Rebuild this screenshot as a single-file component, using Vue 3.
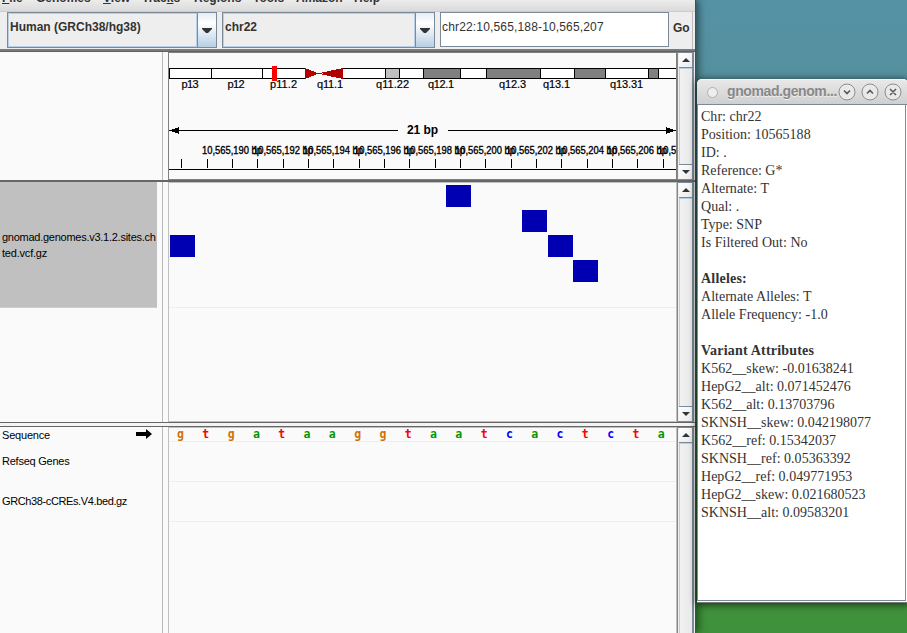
<script setup>
const menus = [
  { pre: '', key: 'F', post: 'ile', w: 34 },
  { pre: 'Genomes', key: '', post: '', w: 67 },
  { pre: '', key: 'V', post: 'iew', w: 39 },
  { pre: 'Trac', key: 'k', post: 's', w: 52 },
  { pre: 'Regions', key: '', post: '', w: 59 },
  { pre: 'Tools', key: '', post: '', w: 43 },
  { pre: 'Amazon', key: '', post: '', w: 58 },
  { pre: 'Help', key: '', post: '', w: 40 },
]
// Coordinates in the drawings are relative to each data panel's left edge.
const bands = [
  [0, 42, '#fff'], [42, 51, '#fff'], [93, 43, '#fff'],
  [173, 43, '#fff'], [216, 14, '#c0c0c0'], [230, 24, '#fff'],
  [254, 37, '#808080'], [291, 26, '#fff'], [317, 54, '#808080'],
  [371, 34, '#fff'], [405, 31, '#808080'], [436, 43, '#fff'],
  [479, 10, '#808080'], [489, 30, '#fff'],
]
const bandLabels = [
  ['p13', 12.5, 17], ['p12', 58.5, 17], ['p11.2', 101, 27], ['q11.1', 148, 26], ['q11.22', 207, 33],
  ['q12.1', 259, 26], ['q12.3', 330, 27], ['q13.1', 374, 27], ['q13.31', 441, 33],
]
const ticks = [12, 38, 63, 88, 114, 139, 164, 190, 215, 240, 266, 291, 316, 342, 367, 392, 418, 443, 468, 494]
const coords = [63, 114, 164, 215, 266, 316, 367, 418, 468, 519].map((x, i) => ({
  x: x - 30, t: `10,565,${190 + i * 2} bp`,
}))
const variants = [[1, 53], [277, 3], [353, 28], [379, 53], [404, 78]]
const colors = { g: '#d17105', t: '#ff0000', a: '#009600', c: '#0000ff' }
const bases = 'gtgataaggtaatcactcta'.split('').map((b, i) => ({
  b, x: 11.5 + i * 25.3, c: colors[b],
}))
const lines = [
  'Chr: chr22', 'Position: 10565188', 'ID: .', 'Reference: G*', 'Alternate: T', 'Qual: .', 'Type: SNP',
  'Is Filtered Out: No', '', '#Alleles:', 'Alternate Alleles: T', 'Allele Frequency: -1.0', '',
  '#Variant Attributes', 'K562__skew: -0.01638241', 'HepG2__alt: 0.071452476', 'K562__alt: 0.13703796',
  'SKNSH__skew: 0.042198077', 'K562__ref: 0.15342037', 'SKNSH__ref: 0.05363392', 'HepG2__ref: 0.049771953',
  'HepG2__skew: 0.021680523', 'SKNSH__alt: 0.09583201',
].map(s => ({ bold: s[0] === '#', t: s.replace('#', '') }))
</script>

<template>
  <div class="desktop">
    <main class="igv">
      <nav class="menubar">
        <span v-for="(m, i) in menus" :key="i" class="menu" :style="{ width: m.w + 'px' }">{{ m.pre }}<i v-if="m.key">{{ m.key }}</i>{{ m.post }}</span>
      </nav>
      <div class="toolbar">
        <div class="combo genome">
          <span class="value">Human (GRCh38/hg38)</span>
          <span class="drop"><svg width="10" height="5"><path d="M0 0h10v1L6 5H4L0 1z" fill="#333" /></svg></span>
        </div>
        <div class="combo chrom">
          <span class="value">chr22</span>
          <span class="drop"><svg width="10" height="5"><path d="M0 0h10v1L6 5H4L0 1z" fill="#333" /></svg></span>
        </div>
        <div class="locus">chr22:10,565,188-10,565,207</div>
        <div class="go">Go</div>
      </div>
      <div class="divider top"></div>

      <section class="panel header">
        <div class="names"></div>
        <div class="gap"></div>
        <div class="data">
          <svg class="draw" width="507" height="126" shape-rendering="crispEdges">
            <rect v-for="(b, i) in bands" :key="i" :x="b[0] + .5" y="15.5" :width="b[1]" height="10" :fill="b[2]" stroke="#000" />
            <path d="M136 15l11 4.5v2L136 26z M174 15l-21 4.5v2L174 26z M146 20h8v1h-8z" fill="#b00000" />
            <rect x="103" y="13" width="5" height="15" fill="#f00" />
            <text v-for="l in bandLabels" :key="l[0]" :x="l[1]" y="35" :textLength="l[2]" class="band">{{ l[0] }}</text>
            <path d="M0 77.5h229M279 77.5h228M0 116.5h507" stroke="#000" />
            <path d="M2 77l8-3v7l-8-3z M505 77l-8-3v7l8-3z" fill="#000" />
            <text x="238" y="81" textLength="31" class="span">21 bp</text>
            <rect v-for="x in ticks" :key="x" :x="x" y="106" width="1" height="9" />
            <text v-for="c in coords" :key="c.t" :x="c.x" y="101" textLength="60" lengthAdjust="spacingAndGlyphs" class="coord">{{ c.t }}</text>
          </svg>
        </div>
        <div class="scroll"><b><svg width="8" height="4"><path d="M4 0L8 4H0z" /></svg></b><em></em><b><svg width="8" height="4"><path d="M4 4L8 0H0z" /></svg></b></div>
      </section>
      <div class="divider mid"></div>

      <section class="panel variants">
        <div class="names">
          <div class="selected"><span class="l1">gnomad.genomes.v3.1.2.sites.ch</span><span class="l2">ted.vcf.gz</span></div>
        </div>
        <div class="gap"></div>
        <div class="data">
          <svg class="draw" width="507" height="238" shape-rendering="crispEdges">
            <rect v-for="(v, i) in variants" :key="i" :x="v[0]" :y="v[1] - 1" width="25" height="22" fill="#0000b2" />
            <rect x="0" y="124" width="507" height="1" fill="#eee" />
          </svg>
        </div>
        <div class="scroll"><b><svg width="8" height="4"><path d="M4 0L8 4H0z" /></svg></b><em></em><b><svg width="8" height="4"><path d="M4 4L8 0H0z" /></svg></b></div>
      </section>
      <div class="divider split"></div>

      <section class="panel features">
        <div class="names">
          <div class="name seq"><span>Sequence</span><svg width="16" height="10" viewBox="0 0 16 10"><path d="M0 3h10V0l6 5-6 5V7H0z" /></svg></div>
          <div class="name refseq">Refseq Genes</div>
          <div class="name ccre">GRCh38-cCREs.V4.bed.gz</div>
        </div>
        <div class="gap"></div>
        <div class="data">
          <svg class="draw" width="507" height="205">
            <text v-for="(s, i) in bases" :key="i" :x="s.x" y="9.6" :fill="s.c" class="base">{{ s.b }}</text>
            <g fill="#eee"><rect y="13" width="507" height="1" /><rect y="53" width="507" height="1" /><rect y="93" width="507" height="1" /></g>
          </svg>
        </div>
        <div class="scroll"><b><svg width="8" height="4"><path d="M4 0L8 4H0z" /></svg></b><em></em></div>
      </section>
    </main>

    <aside class="popup">
      <header class="title">
        <span class="dot"></span>
        <span class="caption">gnomad.genom...</span>
        <svg class="controls" width="64" height="18" viewBox="0 0 64 18">
          <g fill="#e9e9e9" stroke="#8e8e8e"><circle cx="9" cy="9" r="8" /><circle cx="32" cy="9" r="8" /><circle cx="55" cy="9" r="8" /></g>
          <g fill="none" stroke="#5a5a5a" stroke-width="1.6"><path d="M6 7.5l3 3 3-3M29 10.5l3-3 3 3M52 6l6 6M58 6l-6 6" /></g>
        </svg>
      </header>
      <div class="details">
        <p v-for="(l, i) in lines" :key="i" :class="{ bold: l.bold }">{{ l.t }}</p>
      </div>
    </aside>
  </div>
</template>

<style>
body { margin: 0; overflow: hidden; }
</style>
<style scoped>
* { box-sizing: border-box; }
.desktop { position: relative; width: 907px; height: 633px; overflow: hidden; background: linear-gradient(#5492a5 0, #56909d 80px, #3f913b 600px, #3f913b); font-family: "Liberation Sans", sans-serif; }
.igv { position: absolute; left: 0; top: 0; width: 696px; height: 633px; background: #eee; border-right: 1px solid #4c4c4c; box-shadow: 2px 0 8px rgba(0, 0, 0, .55); display: flex; flex-direction: column; overflow: visible; }
.menubar { height: 12px; flex: none; display: flex; overflow: hidden; padding-left: 2px; background: linear-gradient(#ececec, #dadada); border-bottom: 1px solid #ccc; }
.menu { flex: none; white-space: nowrap; font: bold 12px/14px "Liberation Sans", sans-serif; color: #333; margin-top: -9px; height: 20px; }
.menu i { font-style: normal; text-decoration: underline; text-underline-offset: 1px; text-decoration-thickness: 1px; text-decoration-skip-ink: none; }
.toolbar { height: 37px; flex: none; display: flex; align-items: flex-start; padding-left: 7px; width: 693px; border-right: 1px solid #bbb; color: #333; }
.combo { height: 36px; border: 1px solid #7a8a99; display: flex; font-weight: bold; font-size: 12px; background: #eee; }
.genome { width: 210px; margin-right: 5px; }
.chrom { width: 213px; margin-right: 5px; }
.value { flex: 1; border: 1px solid #b8cfe5; line-height: 27px; padding-left: 1px; }
.drop { width: 19px; border-left: 1px solid #7a8a99; background: linear-gradient(#e3edf6, #fff 30%, #b8cfe5); display: flex; align-items: center; justify-content: center; }
.locus { width: 229px; height: 35px; border: 1px solid #7a8a99; background: #fff; font-size: 12px; line-height: 29px; padding-left: 1px; letter-spacing: .16px; white-space: nowrap; }
.go { margin-left: 4px; font-weight: bold; font-size: 12px; line-height: 32px; }
.divider { flex: none; width: 695px; background: #666; }
.top { height: 3px; background: linear-gradient(#7b7b7b 66%, #606060 66%); }
.mid { height: 2px; }
.split { height: 5px; background: #f4f4f4; border-top: 1px solid #666; border-bottom: 1px solid #666; }
.panel { display: flex; flex: none; width: 694px; background: #fafafa; font-size: 11px; color: #000; }
.header { height: 128px; }
.variants { height: 240px; }
.features { height: 206px; }
.names { width: 162px; }
.gap { width: 6px; border-left: 1px solid #bbb; background: #fafafa; }
.data { width: 509px; overflow: hidden; border: 1px solid #c0c0c0; }
.header .data { border-color: #808080; }
.features .data { border-bottom: 0; }
.draw { display: block; }
.scroll { width: 17px; display: flex; flex-direction: column; border: 1px solid #7a8a99; border-right-width: 2px; background: #eee; padding-left: 1px; }
.features .scroll { border-bottom: 0; }
.scroll b { height: 14px; flex: none; display: flex; align-items: center; justify-content: center; background: linear-gradient(135deg, #fff, #ebebeb); fill: #333; }
.scroll em { flex: 1; border: 1px solid #7a8a99; border-width: 1px 0; box-shadow: inset 1px 1px #b8cfe5; background: linear-gradient(90deg, #f2f2f2, #e9e9e9); }
.features em { border-bottom: 0; }
.selected { width: 157px; height: 126px; background: #c0c0c0; border-bottom: 1px solid #ccc; padding: 47px 0 0 2px; display: flex; flex-direction: column; white-space: nowrap; }
.selected span { line-height: 16px; }
.l1 { letter-spacing: -.26px; }
.l2 { letter-spacing: -.2px; }
.name { padding-left: 2px; line-height: 16px; white-space: nowrap; }
.seq { display: flex; height: 26px; width: 152px; justify-content: space-between; letter-spacing: -.2px; }
.seq svg { margin-top: 2px; }
.refseq { height: 40px; letter-spacing: -.24px; }
.ccre { letter-spacing: -.38px; }
.band { font-size: 11px; stroke: #000; stroke-width: .2px; }
.span { font-size: 12px; font-weight: bold; }
.coord { font-size: 10.5px; stroke: #000; stroke-width: .35px; }
.base { font: bold 11.5px "DejaVu Sans Mono", monospace; text-anchor: middle; }
.popup { position: absolute; left: 697px; top: 79px; width: 211px; height: 524px; border-radius: 5px 5px 0 0; background: #fff; box-shadow: 0 1px 7px 1px rgba(0, 0, 0, .6); display: flex; flex-direction: column; border-bottom: 1px solid #777; }
.title { height: 26px; flex: none; display: flex; align-items: center; padding: 0 4px 0 10px; background: linear-gradient(#e8e8e8, #cfcfcf); border-top: 1px solid #f5f5f5; border-bottom: 1px solid #7a8a99; border-radius: 5px 5px 0 0; }
.dot { width: 11px; height: 11px; border: 1px solid #b0b0b0; border-radius: 50%; background: #eee; }
.caption { margin-left: 9px; width: 111px; font-weight: bold; font-size: 14px; line-height: 16px; color: #888; letter-spacing: -.4px; white-space: nowrap; margin-top: -3px; text-shadow: 0 1px #f0f0f0; }
.controls { flex: none; }
.details { flex: 1; border: 1px solid #7a8a99; border-top: 0; width: 209px; margin-bottom: 1px; padding: 3px 0 0 3px; }
.details p { margin: 0; height: 18px; font: 14px/18px "Liberation Serif", serif; color: #333; white-space: nowrap; letter-spacing: .02px; }
.details p.bold { font-weight: bold; letter-spacing: .2px; }
</style>
